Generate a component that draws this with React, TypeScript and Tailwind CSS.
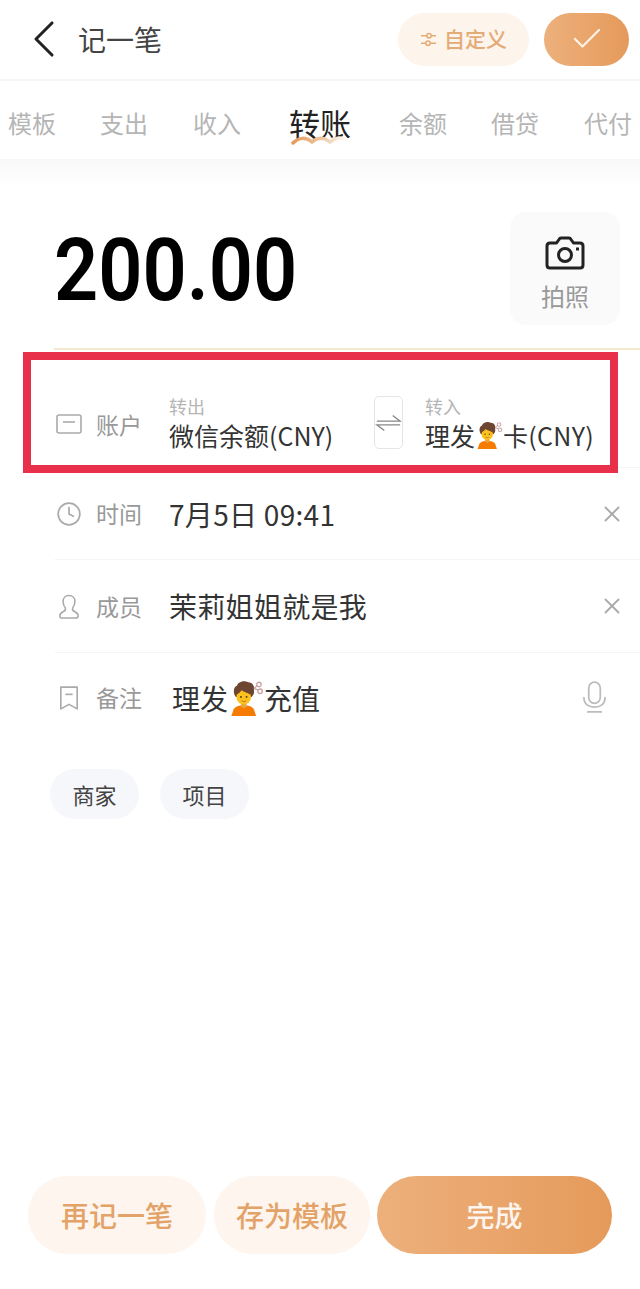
import { Check, ChevronLeft, Clock, X } from 'lucide-react';

const cjk = { fontFamily: '"Noto Sans CJK SC", Roboto, sans-serif' };

// hairdresser emoji, there is no colour emoji font in the sandbox
function HaircutEmoji({ size }: { size: number }) {
  return (
    <svg viewBox="0 0 32 32" width={size} height={size} className="shrink-0 inline-block">
      <path d="M3 32l2-6c1-2 4-3 7-3.500h4c3 .5 6 1.500 7 3.500l2 6z" fill="#f57c00" />
      <path d="M11.500 20h5v3.500c-1 1.500-4 1.500-5 0z" fill="#e8a83e" />
      <path d="M7 15C4 11 5 6 8 5c1-3 6-5 10-3 4 0 6 4 5 7 .5 2 0 4-2 6z" fill="#6d4530" />
      <ellipse cx="14" cy="15" rx="6.500" ry="6.800" fill="#fcc21b" />
      <path d="M7 13c2-1 4-2 5-4 2 2 6 2 8 4l1-5-6-4-7 2z" fill="#6d4530" />
      <circle cx="11.500" cy="15" r=".8" fill="#4a3020" />
      <circle cx="16.500" cy="15" r=".8" fill="#4a3020" />
      <path d="M12 18.500c1 .8 3 .8 4 0" stroke="#a8652a" strokeWidth=".7" fill="none" />
      <circle cx="27.500" cy="4" r="2" fill="none" stroke="#c9a3a3" strokeWidth="1.200" />
      <circle cx="28.500" cy="10" r="2" fill="none" stroke="#c9a3a3" strokeWidth="1.200" />
      <path d="M23 7.500l3-2.500M23 7.500l4 1.500" stroke="#c9a3a3" strokeWidth="1.100" />
    </svg>
  );
}

function Row({
  icon,
  label,
  trailing,
  children,
  height,
}: {
  icon: React.ReactNode;
  label: string;
  trailing?: React.ReactNode;
  children: React.ReactNode;
  height: string;
}) {
  return (
    <div className={`ml-[55px] flex items-center border-b border-[#f4f4f4] ${height}`}>
      <div className="flex w-[28px] justify-center">{icon}</div>
      <span className="ml-[13px] w-[73px] text-[23px] text-[#999999]">{label}</span>
      <div className="flex-1 text-[28px] tracking-[0.3px] text-[#333333]">{children}</div>
      {trailing}
    </div>
  );
}

export default function App() {
  const tabs = [
    { name: '模板', cls: 'ml-2' },
    { name: '支出', cls: 'ml-[44px]' },
    { name: '收入', cls: 'ml-[45px]' },
  ];
  const tabsRight = [
    { name: '余额', cls: 'ml-[48px]' },
    { name: '借贷', cls: 'ml-[44px]' },
    { name: '代付', cls: 'ml-[45px]' },
  ];

  return (
    <div className="relative flex h-[1289px] w-[640px] flex-col overflow-hidden bg-white" style={cjk}>
      <header className="flex h-[81px] shrink-0 items-center border-b-2 border-[#f5f5f5] pb-[1px]">
        <ChevronLeft className="ml-[12px] h-[64px] w-[64px] text-[#222222]" strokeWidth={1.15} />
        <span className="ml-[2px] text-[28px] text-[#444444]">记一笔</span>
        <button className="ml-auto flex h-[53px] w-[131px] items-center justify-center gap-[7px] rounded-full bg-[#fdf4ec] text-[21px] font-medium text-[#e3ab76]">
          <svg viewBox="0 0 18 18" width="17" height="17" fill="none" stroke="#e3ab76" strokeWidth="1.6">
            <path d="M1 5h6M12 5h5M1 13h5M11 13h6" />
            <circle cx="9.500" cy="5" r="2.300" />
            <circle cx="8.500" cy="13" r="2.300" />
          </svg>
          自定义
        </button>
        <button className="ml-[15px] mr-[11px] flex h-[53px] w-[85px] items-center justify-center rounded-full bg-gradient-to-r from-[#edb07c] to-[#e59a5a]">
          <Check className="h-[36px] w-[36px] text-[#fdf1e6]" strokeWidth={1.5} />
        </button>
      </header>

      <nav className="flex h-[78px] shrink-0 items-center whitespace-nowrap pt-[6px] text-[24px] text-[#b5b5b5]">
        {tabs.map((t) => (
          <span key={t.name} className={t.cls}>{t.name}</span>
        ))}
        <span className="relative ml-[48px] text-[31px] text-[#222222]">
          转账
          <svg viewBox="0 0 58 10" width="58" height="10" className="absolute left-[2px] top-[35px]" fill="none">
            <defs>
              <linearGradient id="wave">
                <stop offset="0" stopColor="#e59a5a" />
                <stop offset="0.55" stopColor="#efc8a6" />
                <stop offset="1" stopColor="#ffffff" />
              </linearGradient>
            </defs>
            <path d="M2 8c6-6 13-6 19-1 6-5 12-5 18 0 6-5 11-5 18-2" stroke="url(#wave)" strokeWidth="3.500" strokeLinecap="round" />
          </svg>
        </span>
        {tabsRight.map((t) => (
          <span key={t.name} className={t.cls}>{t.name}</span>
        ))}
      </nav>

      <div className="h-[28px] shrink-0 bg-gradient-to-b from-[#f8f8f8] to-white" />

      <section className="ml-[54px] flex h-[163px] shrink-0 border-b-2 border-[#f3e7cf]">
        <div className="origin-left scale-x-[0.88] pt-[18px] text-[88px] font-semibold leading-[130px] text-black" style={{ fontFamily: 'Roboto, sans-serif' }}>
          200.00
        </div>
        <div className="ml-auto mr-[20px] mt-[25px] flex h-[113px] w-[110px] flex-col items-center rounded-[16px] bg-[#fafafa] pt-[24px]">
          <svg viewBox="0 0 40 34" width="40" height="34" fill="none" stroke="#222222" strokeWidth="3" strokeLinejoin="round">
            <path d="M5 7h6.500l2.500-3.500c.5-1 1-1.500 2-1.500h8c1 0 1.500.5 2 1.500L28.500 7H35c2 0 3 1 3 3v19c0 2-1 3-3 3H5c-2 0-3-1-3-3V10c0-2 1-3 3-3z" />
            <circle cx="20" cy="19" r="6.500" />
            <path d="M31 13h3" />
          </svg>
          <span className="mt-[8px] text-[24px] text-[#999999]">拍照</span>
        </div>
      </section>

      <div className="ml-[55px] flex h-[118px] shrink-0 items-center border-b border-[#f4f4f4] pt-[28px]">
        <div className="mt-[3px] flex w-[28px] justify-center">
          <svg viewBox="0 0 26 20" width="26" height="20" fill="none" stroke="#aaaaaa" strokeWidth="1.6">
            <rect x="1" y="1" width="24" height="18" rx="2" />
            <path d="M7 8h12" />
          </svg>
        </div>
        <span className="ml-[13px] mt-[3px] w-[73px] text-[23px] text-[#999999]">账户</span>
        <div className="w-[205px]">
          <div className="text-[18px] leading-[24px] text-[#b5b5b5]">转出</div>
          <div className="text-[25px] leading-[34px] text-[#333333]">微信余额(CNY)</div>
        </div>
        <div className="flex h-[53px] w-[29px] items-center justify-center rounded-[5px] border border-[#e5e5e5]">
          <svg viewBox="0 0 29 20" width="27" height="20" fill="none" stroke="#888888" strokeWidth="1.5">
            <path d="M2 8h25L19 2M27 12H2l8 6" />
          </svg>
        </div>
        <div className="ml-[22px]">
          <div className="text-[18px] leading-[24px] text-[#b5b5b5]">转入</div>
          <div className="flex items-center text-[25px] leading-[34px] text-[#333333]">
            理发
            <HaircutEmoji size={28} />
            <span className="tracking-[0.3px]">卡(CNY)</span>
          </div>
        </div>
      </div>

      <Row
        height="h-[92px] shrink-0"
        label="时间"
        icon={<Clock className="h-[26px] w-[26px] text-[#aaaaaa]" strokeWidth={1.6} />}
        trailing={<X className="mr-[15px] h-[26px] w-[26px] text-[#aaaaaa]" strokeWidth={1.7} />}
      >
        7月5日 09:41
      </Row>
      <Row
        height="h-[93px] shrink-0"
        label="成员"
        icon={
          <svg viewBox="0 0 24 28" width="22" height="27" fill="none" stroke="#aaaaaa" strokeWidth="1.7" strokeLinejoin="round">
            <path d="M12 2c-4 0-6.500 3-6.500 6.500 0 3 1 5 2.500 7 .5 1.500 0 3-2 4-2 1-4 2-4 4.500 0 2 1 2.500 2.500 2.500h15c1.500 0 2.500-.5 2.500-2.500 0-2.500-2-3.500-4-4.500-2-1-2.500-2.500-2-4 1.500-2 2.500-4 2.500-7C18.500 5 16 2 12 2z" />
          </svg>
        }
        trailing={<X className="mr-[15px] h-[26px] w-[26px] text-[#aaaaaa]" strokeWidth={1.7} />}
      >
        茉莉姐姐就是我
      </Row>
      <div className="ml-[55px] flex h-[89px] shrink-0 items-center">
        <div className="flex w-[28px] justify-center">
          <svg viewBox="0 0 22 28" width="20" height="26" fill="none" stroke="#aaaaaa" strokeWidth="1.8" strokeLinejoin="round">
            <path d="M2 2h18v24l-9-5-9 5z" />
            <path d="M7 10h8" />
          </svg>
        </div>
        <span className="ml-[13px] w-[76px] text-[23px] text-[#999999]">备注</span>
        <div className="flex flex-1 items-center text-[28px] text-[#333333]">
          理发
          <HaircutEmoji size={36} />
          充值
        </div>
        <svg viewBox="0 0 26 34" width="25" height="33" fill="none" stroke="#bbbbbb" strokeWidth="1.8" strokeLinecap="round" className="mr-[33px]">
          <rect x="7" y="1" width="12" height="22" rx="6" />
          <path d="M2 17c0 7 5 10 11 10s11-3 11-10" />
          <path d="M6 32h14" />
        </svg>
      </div>

      <div className="ml-[50px] mt-[27px] flex gap-[21px] text-[22px] text-[#444444]">
        <span className="flex h-[50px] w-[89px] items-center justify-center rounded-[25px] bg-[#f6f7fa]">商家</span>
        <span className="flex h-[50px] w-[89px] items-center justify-center rounded-[25px] bg-[#f6f7fa]">项目</span>
      </div>

      <footer className="mb-[35px] ml-[28px] mt-auto flex gap-[8px] text-[28px] font-medium">
        <button className="h-[78px] w-[178px] rounded-full bg-[#fdf5ee] text-[#e3a368]">再记一笔</button>
        <button className="h-[78px] w-[156px] rounded-full bg-[#fdf5ee] text-[#e3a368]">存为模板</button>
        <button className="ml-[-1px] h-[78px] w-[235px] rounded-full bg-gradient-to-r from-[#edb07c] to-[#e59a5a] text-[#fdf5ee]">完成</button>
      </footer>

      {/* annotation drawn over the account row */}
      <div className="pointer-events-none absolute left-[23px] top-[352px] h-[121px] w-[595px] border-[8px] border-[#e8304a]" />
    </div>
  );
}
